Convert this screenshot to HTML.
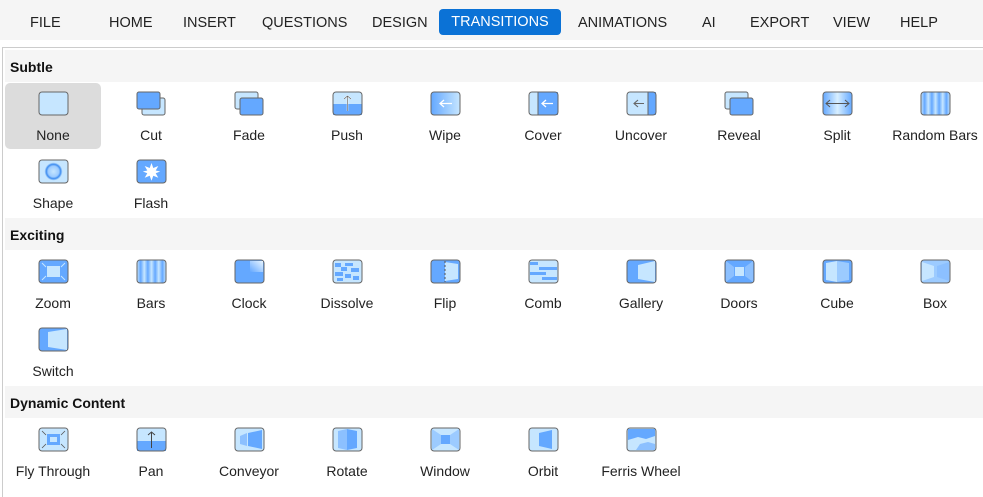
<!DOCTYPE html>
<html><head><meta charset="utf-8"><style>
*{margin:0;padding:0;box-sizing:border-box}
body{width:983px;height:487px;overflow:hidden;background:#fff;font-family:"Liberation Sans",sans-serif;position:relative;color:#222}
.top{position:absolute;left:0;top:0;width:983px;height:40px;background:#f5f5f5}
.m{position:absolute;top:15px;font-size:14.5px;color:#222}
.sel{position:absolute;left:439px;top:9px;width:122px;height:26px;background:#0b72d6;border-radius:4px;color:#fff;font-size:14.5px;text-align:center;line-height:27px}
.panel{position:absolute;left:2px;top:47px;width:990px;height:450px;border-left:1px solid #ccc;border-top:1px solid #ccc}
.h{position:absolute;left:5px;width:978px;height:32px;background:#f5f5f5;font-weight:bold;font-size:14px;padding-left:5px;line-height:34px;color:#111}
.it{position:absolute;width:96px;height:66px;text-align:center;font-size:14px;color:#222}
.it svg{position:absolute;left:33px;top:8px}
.it span{position:absolute;left:-5px;right:-5px;top:44px}
.none{background:#dcdcdc;border-radius:5px}
</style></head><body>
<div class="top"></div>
<div class="m" style="left:30px">FILE</div>
<div class="m" style="left:109px">HOME</div>
<div class="m" style="left:183px">INSERT</div>
<div class="m" style="left:262px">QUESTIONS</div>
<div class="m" style="left:372px">DESIGN</div>
<div class="sel">TRANSITIONS</div>
<div class="m" style="left:578px">ANIMATIONS</div>
<div class="m" style="left:702px">AI</div>
<div class="m" style="left:750px">EXPORT</div>
<div class="m" style="left:833px">VIEW</div>
<div class="m" style="left:900px">HELP</div>
<div class="panel"></div>
<div class="h" style="top:50px">Subtle</div>
<div class="h" style="top:218px">Exciting</div>
<div class="h" style="top:386px">Dynamic Content</div>

<div class="it none" style="left:5px;top:83px"><svg width="31" height="25"><rect x="1" y="1" width="29" height="23" rx="3" fill="#c6e6ff" stroke="#666"/></svg><span>None</span></div>
<div class="it" style="left:103px;top:83px"><svg width="31" height="25"><rect x="6" y="7" width="23" height="17" rx="2" fill="#c6e6ff" stroke="#666"/><rect x="1" y="1" width="23" height="17" rx="2" fill="#64a8ff" stroke="#666"/></svg><span>Cut</span></div>
<div class="it" style="left:201px;top:83px"><svg width="31" height="25"><rect x="1" y="1" width="23" height="17" rx="2" fill="#c6e6ff" stroke="#666"/><rect x="6" y="7" width="23" height="17" rx="2" fill="#64a8ff" stroke="#666"/></svg><span>Fade</span></div>
<div class="it" style="left:299px;top:83px"><svg width="31" height="25"><rect x="1" y="1" width="29" height="23" rx="3" fill="#c6e6ff"/><rect x="1" y="13" width="29" height="11" fill="#64a8ff"/><rect x="1" y="1" width="29" height="23" rx="3" fill="none" stroke="#666"/><path d="M15.5 20V5M12 8l3.5-3 3.5 3" stroke="#fff" stroke-width="1.4" fill="none"/><path d="M15.5 20V5M12 8l3.5-3 3.5 3" stroke="#555" stroke-width=".6" fill="none"/></svg><span>Push</span></div>
<div class="it" style="left:397px;top:83px"><svg width="31" height="25"><defs><linearGradient id="g1"><stop offset="0" stop-color="#64a8ff"/><stop offset="1" stop-color="#c6e6ff"/></linearGradient></defs><rect x="1" y="1" width="29" height="23" rx="3" fill="url(#g1)" stroke="#666"/><path d="M22 12.5H10M14 9l-4 3.5 4 3.5" stroke="#fff" stroke-width="1.3" fill="none"/></svg><span>Wipe</span></div>
<div class="it" style="left:495px;top:83px"><svg width="31" height="25"><rect x="1" y="1" width="29" height="23" rx="3" fill="#c6e6ff"/><rect x="10" y="1" width="20" height="23" fill="#64a8ff"/><rect x="1" y="1" width="29" height="23" rx="3" fill="none" stroke="#666"/><path d="M10 1v23" stroke="#666"/><path d="M25 12.5H14M18 9l-4 3.5 4 3.5" stroke="#fff" stroke-width="1.3" fill="none"/></svg><span>Cover</span></div>
<div class="it" style="left:593px;top:83px"><svg width="31" height="25"><rect x="1" y="1" width="29" height="23" rx="3" fill="#c6e6ff"/><rect x="22" y="1" width="8" height="23" fill="#64a8ff"/><rect x="1" y="1" width="29" height="23" rx="3" fill="none" stroke="#666"/><path d="M22 1v23" stroke="#666"/><path d="M18 12.5H8M12 9l-4 3.5 4 3.5" stroke="#666" stroke-width="1.1" fill="none"/></svg><span>Uncover</span></div>
<div class="it" style="left:691px;top:83px"><svg width="31" height="25"><rect x="1" y="1" width="23" height="17" rx="2" fill="#c6e6ff" stroke="#666"/><rect x="6" y="7" width="23" height="17" rx="2" fill="#64a8ff" stroke="#666"/></svg><span>Reveal</span></div>
<div class="it" style="left:789px;top:83px"><svg width="31" height="25"><defs><linearGradient id="g2"><stop offset="0" stop-color="#64a8ff"/><stop offset=".5" stop-color="#d8efff"/><stop offset="1" stop-color="#64a8ff"/></linearGradient></defs><rect x="1" y="1" width="29" height="23" rx="3" fill="url(#g2)" stroke="#666"/><path d="M4 12.5h23M8 9l-4 3.5 4 3.5M23 9l4 3.5-4 3.5" stroke="#555" stroke-width="1" fill="none"/></svg><span>Split</span></div>
<div class="it" style="left:887px;top:83px"><svg width="31" height="25"><defs><linearGradient id="g3" spreadMethod="repeat" x1="0" x2=".25"><stop offset="0" stop-color="#c6e6ff"/><stop offset=".5" stop-color="#64a8ff"/><stop offset="1" stop-color="#c6e6ff"/></linearGradient></defs><rect x="1" y="1" width="29" height="23" rx="3" fill="url(#g3)" stroke="#666"/></svg><span>Random Bars</span></div>

<div class="it" style="left:5px;top:151px"><svg width="31" height="25"><defs><radialGradient id="g4"><stop offset="0" stop-color="#c6e6ff"/><stop offset=".6" stop-color="#9ccbff"/><stop offset=".8" stop-color="#3d8cf0"/><stop offset="1" stop-color="#c6e6ff"/></radialGradient></defs><rect x="1" y="1" width="29" height="23" rx="3" fill="#c6e6ff" stroke="#666"/><circle cx="15.5" cy="12.5" r="9" fill="url(#g4)"/></svg><span>Shape</span></div>
<div class="it" style="left:103px;top:151px"><svg width="31" height="25"><rect x="1" y="1" width="29" height="23" rx="3" fill="#64a8ff" stroke="#666"/><path d="M15.5 4l1.8 5 5-2-2.6 4.5 4.5 1-4.5 1.8 2.6 4.5-5-2-1.8 5-1.8-5-5 2 2.6-4.5-4.5-1.8 4.5-1-2.6-4.5 5 2z" fill="#fff"/></svg><span>Flash</span></div>

<div class="it" style="left:5px;top:251px"><svg width="31" height="25"><rect x="1" y="1" width="29" height="23" rx="3" fill="#64a8ff" stroke="#666"/><rect x="9" y="7" width="13" height="11" fill="#c6e6ff"/><path d="M4 4l4 4M27 4l-4 4M4 21l4-4M27 21l-4-4" stroke="#c6e6ff"/></svg><span>Zoom</span></div>
<div class="it" style="left:103px;top:251px"><svg width="31" height="25"><rect x="1" y="1" width="29" height="23" rx="3" fill="url(#g3)" stroke="#666"/></svg><span>Bars</span></div>
<div class="it" style="left:201px;top:251px"><svg width="31" height="25"><defs><linearGradient id="g5" x1="0" y1="1" x2="1" y2="0"><stop offset="0" stop-color="#64a8ff"/><stop offset="1" stop-color="#e8f5ff"/></linearGradient></defs><rect x="1" y="1" width="29" height="23" rx="3" fill="#64a8ff" stroke="#666"/><path d="M16 2h13v11H16z" fill="url(#g5)"/></svg><span>Clock</span></div>
<div class="it" style="left:299px;top:251px"><svg width="31" height="25"><rect x="1" y="1" width="29" height="23" rx="3" fill="#c6e6ff" stroke="#666"/><path d="M3 4h6v4H3zM13 4h8v3h-8zM9 8h6v4H9zM19 9h8v4h-8zM3 13h8v4H3zM13 15h6v4h-6zM21 17h6v4h-6zM5 19h6v3H5z" fill="#64a8ff"/></svg><span>Dissolve</span></div>
<div class="it" style="left:397px;top:251px"><svg width="31" height="25"><rect x="1" y="1" width="29" height="23" rx="3" fill="#64a8ff" stroke="#666"/><path d="M15 3l13 2v15l-13 2z" fill="#c6e6ff"/><path d="M15 2v21" stroke="#555" stroke-dasharray="2 2"/></svg><span>Flip</span></div>
<div class="it" style="left:495px;top:251px"><svg width="31" height="25"><rect x="1" y="1" width="29" height="23" rx="3" fill="#c6e6ff" stroke="#666"/><path d="M2 3h8v3H2zM11 8h18v3H11zM2 13h16v3H2zM14 18h15v3H14z" fill="#64a8ff"/></svg><span>Comb</span></div>
<div class="it" style="left:593px;top:251px"><svg width="31" height="25"><rect x="1" y="1" width="29" height="23" rx="3" fill="#64a8ff" stroke="#666"/><path d="M12 6l17-4v21l-17-3z" fill="#c6e6ff"/></svg><span>Gallery</span></div>
<div class="it" style="left:691px;top:251px"><svg width="31" height="25"><rect x="1" y="1" width="29" height="23" rx="3" fill="#64a8ff" stroke="#666"/><path d="M2 2l8 6v9l-8 6zM29 2l-8 6v9l8 6z" fill="#8cc0ff"/><rect x="11" y="8" width="9" height="9" fill="#c6e6ff"/></svg><span>Doors</span></div>
<div class="it" style="left:789px;top:251px"><svg width="31" height="25"><rect x="1" y="1" width="29" height="23" rx="3" fill="#64a8ff" stroke="#666"/><path d="M4 4l11-2v21l-11-2z" fill="#c6e6ff"/><path d="M15 2l12 2v17l-12 2z" fill="#9ccbff"/></svg><span>Cube</span></div>
<div class="it" style="left:887px;top:251px"><svg width="31" height="25"><rect x="1" y="1" width="29" height="23" rx="3" fill="#9ccbff" stroke="#666"/><path d="M2 3l12 4v11l-12 4z" fill="#c6e6ff"/><path d="M29 3l-12 4v11l12 4z" fill="#8cc0ff"/></svg><span>Box</span></div>

<div class="it" style="left:5px;top:319px"><svg width="31" height="25"><rect x="1" y="1" width="29" height="23" rx="3" fill="#64a8ff" stroke="#666"/><path d="M10 5l19-3v21l-19-3z" fill="#c6e6ff"/></svg><span>Switch</span></div>

<div class="it" style="left:5px;top:419px"><svg width="31" height="25"><rect x="1" y="1" width="29" height="23" rx="3" fill="#c6e6ff" stroke="#666"/><rect x="9" y="7" width="13" height="11" fill="#64a8ff"/><rect x="12" y="10" width="7" height="5" fill="#c6e6ff"/><path d="M4 4l4 4M27 4l-4 4M4 21l4-4M27 21l-4-4" stroke="#555" stroke-width=".8"/></svg><span>Fly Through</span></div>
<div class="it" style="left:103px;top:419px"><svg width="31" height="25"><rect x="1" y="1" width="29" height="23" rx="3" fill="#c6e6ff"/><rect x="1" y="14" width="29" height="10" fill="#64a8ff"/><rect x="1" y="1" width="29" height="23" rx="3" fill="none" stroke="#666"/><path d="M15.5 21V5M12 8l3.5-3 3.5 3" stroke="#444" stroke-width="1" fill="none"/></svg><span>Pan</span></div>
<div class="it" style="left:201px;top:419px"><svg width="31" height="25"><rect x="1" y="1" width="29" height="23" rx="3" fill="#c6e6ff" stroke="#666"/><path d="M6 9l7-3v13l-7-2z" fill="#8cc0ff"/><path d="M14 6l14-3v19l-14-3z" fill="#64a8ff"/></svg><span>Conveyor</span></div>
<div class="it" style="left:299px;top:419px"><svg width="31" height="25"><rect x="1" y="1" width="29" height="23" rx="3" fill="#c6e6ff" stroke="#666"/><path d="M6 4l9-2v21l-9-2z" fill="#8cc0ff"/><path d="M15 2l10 2v17l-10 2z" fill="#64a8ff"/></svg><span>Rotate</span></div>
<div class="it" style="left:397px;top:419px"><svg width="31" height="25"><rect x="1" y="1" width="29" height="23" rx="3" fill="#c6e6ff" stroke="#666"/><path d="M2 2l9 6v9l-9 6zM29 2l-9 6v9l9 6z" fill="#9ccbff"/><rect x="11" y="8" width="9" height="9" fill="#64a8ff"/></svg><span>Window</span></div>
<div class="it" style="left:495px;top:419px"><svg width="31" height="25"><rect x="1" y="1" width="29" height="23" rx="3" fill="#c6e6ff" stroke="#666"/><path d="M11 6l13-3v19l-13-3z" fill="#64a8ff"/></svg><span>Orbit</span></div>
<div class="it" style="left:593px;top:419px"><svg width="31" height="25"><rect x="1" y="1" width="29" height="23" rx="3" fill="#c6e6ff" stroke="#666"/><path d="M2 2h27v7l-9 3-8-2-10 3z" fill="#64a8ff"/><path d="M2 23h8l4-6 8-2 7 2v6z" fill="#8cc0ff"/></svg><span>Ferris Wheel</span></div>
</body></html>
